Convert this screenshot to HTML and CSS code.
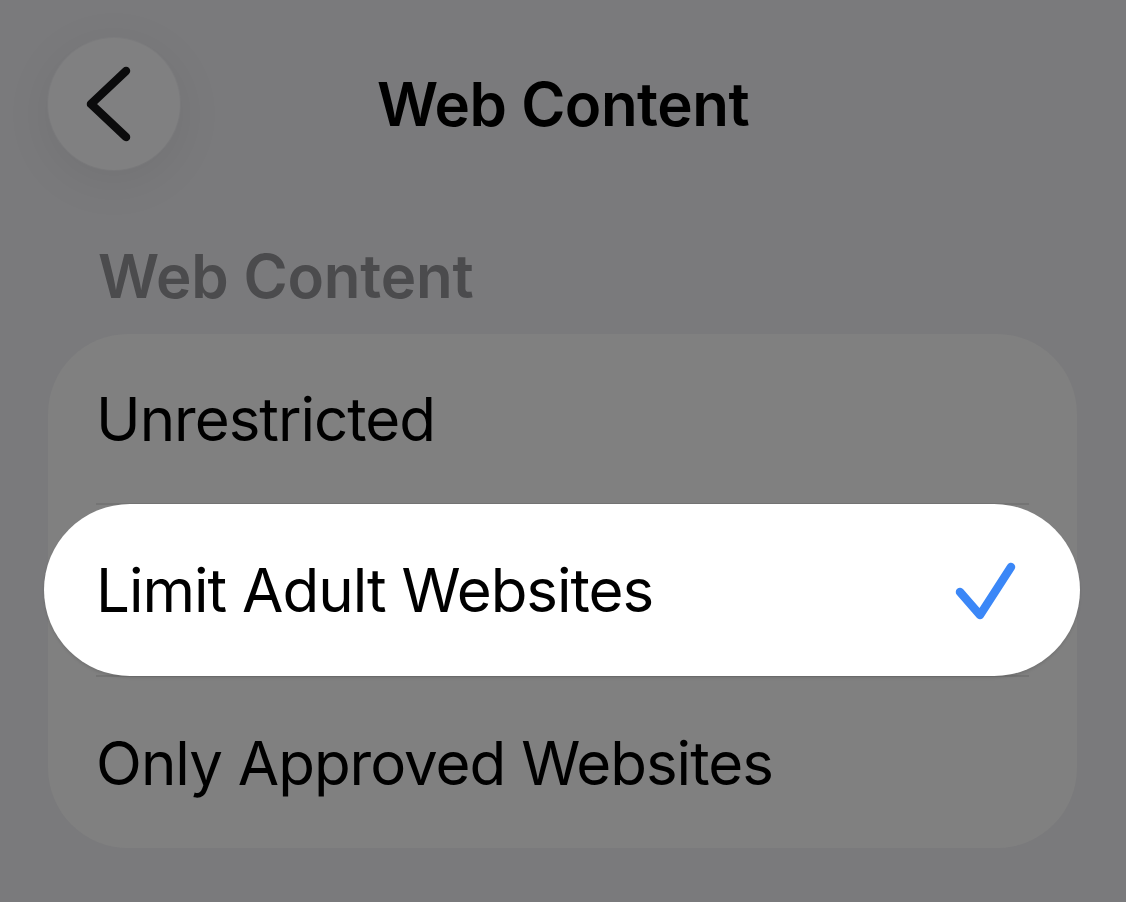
FILE: index.html
```html
<!DOCTYPE html>
<html>
<head>
<meta charset="utf-8">
<link rel="stylesheet" href="styles.css">
</head>
<body>
<div class="screen">
  <header class="nav">
    <div class="nav-left">
      <button class="back" aria-label="Back">
        <svg width="132" height="132" viewBox="0 0 132 132"><path d="M78 33 L43 66 L78 99" fill="none" stroke="#0b0b0c" stroke-width="8.5" stroke-linecap="round" stroke-linejoin="round"/></svg>
      </button>
    </div>
    <h1 class="title">Web Content</h1>
    <div class="nav-right"></div>
  </header>
  <h2 class="section-title">Web Content</h2>
  <div class="card">
    <div class="row"><span class="label">Unrestricted</span></div>
    <div class="sep"></div>
    <div class="row row-selected">
      <span class="label">Limit Adult Websites</span>
      <svg class="check" width="66" height="66" viewBox="0 0 66 66"><path d="M6 35 L26 58 L57 10" fill="none" stroke="#3b87f7" stroke-width="8.5" stroke-linecap="round" stroke-linejoin="round"/></svg>
    </div>
    <div class="sep"></div>
    <div class="row row-last"><span class="label">Only Approved Websites</span></div>
  </div>
</div>
</body>
</html>
```

FILE: styles.css
```css
html, body {
  margin: 0;
  padding: 0;
}
body {
  background: #7a7a7c;
  width: 1126px;
  height: 902px;
  overflow: hidden;
  font-family: Inter, "Noto Sans", sans-serif;
  color: #000;
}
.screen {
  display: flex;
  flex-direction: column;
}
.nav {
  display: grid;
  grid-template-columns: 1fr auto 1fr;
  align-items: center;
  padding: 38px 48px 0 48px;
  height: 132px;
}
.nav-left {
  display: flex;
}
.back {
  width: 132px;
  height: 132px;
  border-radius: 50%;
  border: none;
  padding: 0;
  background: #808081;
  box-shadow: 0 10px 50px rgba(0,0,0,0.07), 0 0 0 1px rgba(255,255,255,0.03);
  display: flex;
  align-items: center;
  justify-content: center;
}
.back svg {
  display: block;
}
.title {
  margin: 0;
  font-size: 60px;
  font-weight: 600;
  letter-spacing: -0.5px;
  line-height: 1;
  color: #000;
}
.section-title {
  margin: 76px 0 0 98px;
  font-size: 60px;
  font-weight: 600;
  letter-spacing: -0.2px;
  line-height: 1;
  color: #4b4b4d;
}
.card {
  margin: 28px 49px 0 48px;
  background: #808080;
  border-radius: 80px;
  display: flex;
  flex-direction: column;
}
.row {
  height: 169px;
  display: flex;
  align-items: center;
  justify-content: space-between;
  padding: 0 48px;
}
.row-last {
  height: 171px;
}
.label {
  font-size: 60px;
  font-weight: 400;
  letter-spacing: -1.0px;
  line-height: 1;
}
.row-selected {
  height: 172px;
  margin: -1px -3px -1px -4px;
  padding: 0 60px 0 52px;
  background: #ffffff;
  border-radius: 86px;
  box-shadow: 0 2px 3px rgba(0,0,0,0.10);
  position: relative;
  z-index: 1;
}
.check {
  display: block;
}
.sep {
  height: 2px;
  margin: 0 48px;
  background: #747474;
}
```
